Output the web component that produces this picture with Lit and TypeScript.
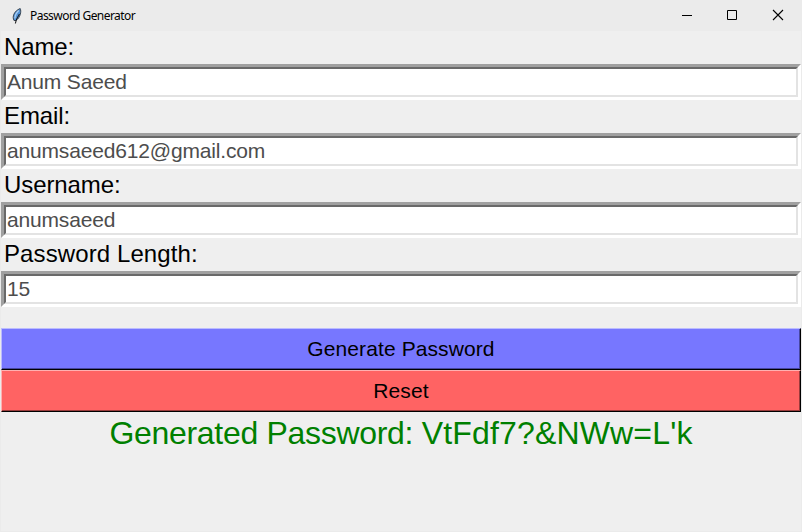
import { LitElement, html, css } from "lit";
import { customElement } from "lit/decorators.js";

interface Field {
  label: string;
  value: string;
}

@customElement("app-root")
export class AppRoot extends LitElement {
  static styles = css`
    :host {
      display: flex;
      flex-direction: column;
      box-sizing: border-box;
      width: 802px;
      height: 532px;
      background: #efefef;
      border: 1px solid #ebebeb;
      border-top: 0;
      overflow: hidden;
      color: #000;
      font-family: "Liberation Sans", Arial, sans-serif;
    }
    .titlebar {
      display: flex;
      align-items: center;
      flex: none;
      height: 31px;
      margin: 0 -1px;
      background: #ebebeb;
    }
    .feather {
      width: 16px;
      height: 16px;
      margin: 0 5px 0 9px;
    }
    .title {
      flex: 1;
      font: 12px/16px "Noto Sans", sans-serif;
      letter-spacing: -0.55px;
      white-space: nowrap;
    }
    .control {
      width: 46px;
      height: 31px;
      flex: none;
    }
    .field {
      flex: none;
    }
    .label {
      height: 33px;
      padding-left: 3px;
      font-size: 24px;
      line-height: 31px;
      white-space: nowrap;
    }
    .field:nth-of-type(-n + 4) .label {
      letter-spacing: -0.1px;
    }
    .field:nth-of-type(5) .label {
      letter-spacing: 0.1px;
    }
    .entry {
      border: 3px solid;
      border-color: #a0a0a0 #fff #fff #a0a0a0;
    }
    .value {
      box-sizing: border-box;
      height: 30px;
      border: 2px solid;
      border-color: #696969 #e3e3e3 #e3e3e3 #696969;
      background: #fff;
      color: #4d4d4d;
      font-size: 21px;
      letter-spacing: -0.17px;
      line-height: 26px;
      padding-left: 1px;
      white-space: nowrap;
    }
    .actions {
      display: flex;
      flex-direction: column;
      margin-top: 21px;
    }
    .button {
      box-sizing: border-box;
      height: 42px;
      border: 1px solid;
      border-color: var(--light) #000 #000 var(--light);
      box-shadow: inset -1px -1px var(--dark);
      background: var(--face);
      text-align: center;
      font-size: 21px;
      letter-spacing: 0.1px;
      line-height: 40px;
    }
    .generate {
      --face: #7777ff;
      --light: #bbbbff;
      --dark: #4747a0;
    }
    .reset {
      --face: #ff6363;
      --light: #ffb1b1;
      --dark: #993b3b;
    }
    .result {
      color: #008000;
      font-size: 32px;
      line-height: 42px;
      text-align: center;
      white-space: nowrap;
    }
    .caption {
      letter-spacing: -0.3px;
    }
    .password {
      letter-spacing: 0.16px;
    }
  `;

  private fields: Field[] = [
    { label: "Name:", value: "Anum Saeed" },
    { label: "Email:", value: "anumsaeed612@gmail.com" },
    { label: "Username:", value: "anumsaeed" },
    { label: "Password Length:", value: "15" },
  ];

  render() {
    return html`
      <div class="titlebar">
        <svg class="feather" viewBox="0 0 16 16">
          <path d="M5 12.5C3 9 4.7 3.2 11.2.5C12.6 3.5 11.3 9.5 7 12.5Z" fill="#4f8fd4" stroke="#3b4754" />
          <path d="M9.8 2.5C7 5 6 8 5.9 10.5" fill="none" stroke="#a6cdf2" stroke-width="1.3" />
          <path d="M10.4 6C9.3 8.5 7.2 10.5 6.4 15.5" fill="none" stroke="#101010" />
        </svg>
        <span class="title">Password Generator</span>
        <svg class="control" viewBox="0 0 46 31"><path d="M18 15.5H28" stroke="#000" /></svg>
        <svg class="control" viewBox="0 0 46 31"><path d="M17.5 10.5H26.5V19.5H17.5Z" fill="none" stroke="#000" /></svg>
        <svg class="control" viewBox="0 0 46 31"><path d="M17 10L27 20M27 10L17 20" stroke="#000" stroke-width="1.1" /></svg>
      </div>
      ${this.fields.map(
        (f) => html`
          <div class="field">
            <div class="label">${f.label}</div>
            <div class="entry"><div class="value">${f.value}</div></div>
          </div>
        `
      )}
      <div class="actions">
        <div class="button generate">Generate Password</div>
        <div class="button reset">Reset</div>
      </div>
      <div class="result">
        <span class="caption">Generated Password: </span><span class="password">VtFdf7?&amp;NWw=L'k</span>
      </div>
    `;
  }
}
